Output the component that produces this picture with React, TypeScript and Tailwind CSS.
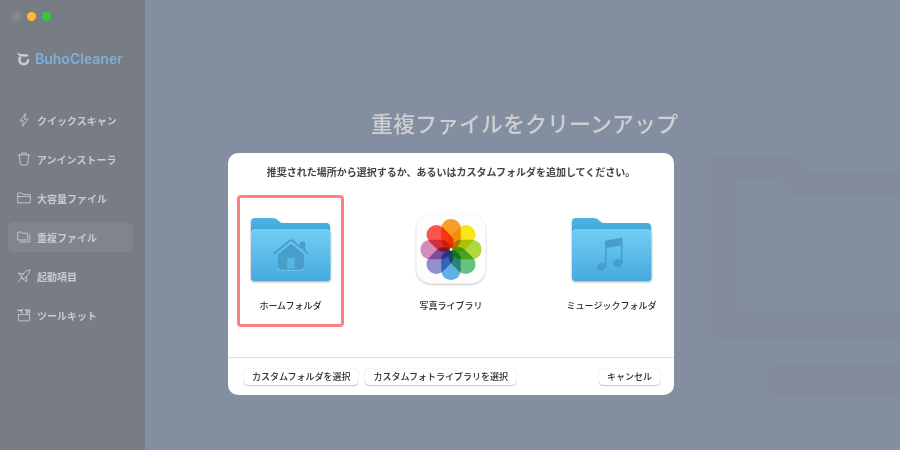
import type { ReactNode } from "react";
import { clsx } from "clsx";

function LineIcon({ children }: { children: ReactNode }) {
  return (
    <svg
      viewBox="0 0 14 14"
      className="size-[14px] shrink-0"
      fill="none"
      stroke="currentColor"
      strokeWidth="0.9"
      strokeLinecap="round"
      strokeLinejoin="round"
      aria-hidden="true"
    >
      {children}
    </svg>
  );
}

const navItems = [
  {
    label: "クイックスキャン",
    icon: <path d="M8.2 1 3 7.800h3.300L5.500 13.300 11 6.200H7.500L8.200 1Z" />,
  },
  {
    label: "アンインストーラ",
    icon: <path d="M1 2.9h12M4.8 2.7V1h4.4v1.7M2.4 3.1l.8 8.9q.1 1 1 1h5.6q.9 0 1-1l.8-8.9" />,
  },
  {
    label: "大容量ファイル",
    icon: <path d="M.7 11.6V2h4.1l1.3 1.5h7.2v8.1q0 .3-.3.3H1q-.3 0-.3-.3ZM.7 5.6h12.6" />,
  },
  {
    label: "重複ファイル",
    active: true,
    icon: <path d="M.7 9.7V2h3.4l1.2 1.3h5.4v6.4q0 .3-.3.3H1q-.3 0-.3-.3ZM3 12h9.3q.5 0 .5-.5V4.8" />,
  },
  {
    label: "起動項目",
    icon: (
      <>
        <path d="M12.700 1.200C9.600 1.200 6.600 3.200 4 8l2 2c4.500-2.500 6.700-5.700 6.700-8.800Z" />
        <path d="M6.300 4.900 1.200 4l3.200 3.500M9.300 8l.600 5-3.600-3M4 9.900l-2.800 2.900M5.200 8.800 3.600 10.400" />
      </>
    ),
  },
  {
    label: "ツールキット",
    icon: (
      <>
        <path d="M1.400 6.600v5.700q0 .6.6.6h10q.6 0 .6-.6V6.600H1.400Z" />
        <path strokeWidth="1.200" d="M1 2.300h3.600l1-1M3.300 2.600l1.900 2.400M8.300 2.200l1.500-.5.900 1.200-1.400 1.300M12.700 1.600l-1 1.100 1.200.8M10.400 4l-1 1M12.500 4.600l-.7.600" />
      </>
    ),
  },
];

function Logo() {
  return (
    <svg viewBox="0 0 14 16" className="h-4 w-[14px] shrink-0" aria-hidden="true">
      <path d="M.3.900C2 2.900 4 3.200 6.500 3.100c2.400-.1 4 .3 5.300 1.600-1.800 1.300-5.300 1.200-8.300.600C1.500 4.500.500 2.900.3.900Z" fill="currentColor" />
      <path
        d="M3.700 5.600C.9 8.900 2.800 13.200 6.800 13.200c2.900 0 4.700-2.200 4.400-5"
        fill="none"
        stroke="currentColor"
        strokeWidth="2.400"
      />
    </svg>
  );
}

function Sidebar() {
  return (
    <aside className="flex w-[145px] shrink-0 flex-col bg-[#787c85] text-[#cbcbcd]">
      <div className="flex gap-[6px] pt-[12px] pl-[12px]">
        <span className="size-[9px] rounded-full bg-[#868891]" />
        <span className="size-[9px] rounded-full bg-[#fdbc2e]" />
        <span className="size-[9px] rounded-full bg-[#36c93f]" />
      </div>
      <div className="mt-[28px] flex h-5 items-center gap-1 pl-[17px]">
        <Logo />
        <span className="font-['Inter',sans-serif] text-[14px] leading-5 font-semibold text-[#7faed8]">BuhoCleaner</span>
      </div>
      <nav className="mt-[36px] flex flex-col gap-[9px] pr-[12px] pl-2">
        {navItems.map((item) => (
          <a
            key={item.label}
            href="#"
            aria-current={item.active ? "page" : undefined}
            className={clsx(
              "flex h-[30px] items-center gap-[6px] rounded-md pl-[9px] text-[10px] font-bold",
              item.active && "bg-[#80848e]",
            )}
          >
            <LineIcon>{item.icon}</LineIcon>
            {item.label}
          </a>
        ))}
      </nav>
    </aside>
  );
}

function Folder({ id, children }: { id: string; children: ReactNode }) {
  return (
    <svg viewBox="0 0 88 76" className="h-[76px] w-[88px]" aria-hidden="true">
      <defs>
        <linearGradient id={`${id}-front`} x1="0" y1="0" x2="0" y2="1">
          <stop offset="0" stopColor="#72cdf5" />
          <stop offset="1" stopColor="#45aadd" />
        </linearGradient>
        <linearGradient id={`${id}-back`} x1="0" y1="0" x2="0" y2="1">
          <stop offset="0" stopColor="#4fb4e4" />
          <stop offset="0.3" stopColor="#36a0d6" />
        </linearGradient>
        <filter id={`${id}-shadow`} x="-10%" y="-10%" width="120%" height="125%">
          <feDropShadow dx="0" dy="1" stdDeviation="1" floodColor="#000" floodOpacity="0.35" />
        </filter>
      </defs>
      <g filter={`url(#${id}-shadow)`}>
        <path
          d="M4 11q0-4 4-4h17c3 0 4.300.7 6 2.400l1.600 1.400c1.200 1 2 1.300 4 1.300H79q4 0 4 4V65q0 4-4 4H8q-4 0-4-4Z"
          fill={`url(#${id}-back)`}
        />
        <rect x="4" y="18.500" width="79.500" height="51.500" rx="3.500" fill={`url(#${id}-front)`} />
        <path d="M4.500 21q.5-2.200 3-2.200H80q2.500 0 3 2.200" fill="none" stroke="#93dcfb" strokeWidth="0.700" />
      </g>
      {children}
    </svg>
  );
}

function HomeFolder() {
  return (
    <Folder id="home">
      <g fill="#469ec9">
        <path
          d="m27.500 42.200 15-12.500q1.500-1.200 3 0L54 36.500v-4.800h3.200v7.700l3.300 2.800"
          fill="none"
          stroke="#469ec9"
          strokeWidth="1.800"
          strokeLinecap="round"
          strokeLinejoin="round"
        />
        <path d="M54 31.700h3.200v8L54 36.500Z" />
        <path
          fillRule="evenodd"
          d="M31 43.500 44 32.800l13 10.700v13q0 2.300-2.300 2.300H33.300q-2.300 0-2.300-2.300ZM40.200 47v9.500h7.600V47Z"
        />
      </g>
      <path d="M31 56.800q.1 2.500 2.400 2.500h21.200q2.300 0 2.400-2.500M40.200 56.800h7.600" fill="none" stroke="#7fcef0" strokeWidth="0.700" />
    </Folder>
  );
}

function MusicFolder() {
  return (
    <Folder id="music">
      <g fill="#469ec9">
        <path d="M37 31q0-1.300 1.300-1.500l15.200-2.700q1-.2 1 .8v24h-1.700V34.500L38.700 37v18.500H37Z" />
        <ellipse cx="33.800" cy="55.500" rx="4.900" ry="4" transform="rotate(-18 33.800 55.500)" />
        <ellipse cx="49.800" cy="52" rx="4.900" ry="4" transform="rotate(-18 49.800 52)" />
      </g>
    </Folder>
  );
}

const petals = ["#f99d2c", "#f9e51a", "#b0d73f", "#66c27e", "#60afe6", "#918fce", "#d48aba", "#fc564c"];

function PhotosIcon() {
  return (
    <svg viewBox="0 0 88 76" className="h-[76px] w-[88px]" aria-hidden="true">
      <defs>
        <filter id="photos-shadow" x="-10%" y="-10%" width="120%" height="125%">
          <feDropShadow dx="0" dy="1" stdDeviation="1" floodColor="#000" floodOpacity="0.3" />
        </filter>
      </defs>
      <rect x="9.500" y="3.500" width="69" height="69" rx="15" fill="#fdfdfd" filter="url(#photos-shadow)" />
      <g className="isolate">
        {petals.map((color, i) => (
          <rect
            key={color}
            x="34.250"
            y="8"
            width="19.500"
            height="30"
            rx="9.500"
            fill={color}
            transform={`rotate(${i * 45} 44 38.500)`}
            className="mix-blend-multiply"
          />
        ))}
      </g>
      <circle cx="44" cy="38.500" r="1.300" fill="#fff" />
    </svg>
  );
}

const locations = [
  { label: "ホームフォルダ", icon: <HomeFolder />, selected: true },
  { label: "写真ライブラリ", icon: <PhotosIcon /> },
  { label: "ミュージックフォルダ", icon: <MusicFolder /> },
];

function DialogButton({ children }: { children: ReactNode }) {
  return (
    <button
      type="button"
      className="h-4 rounded-[4px] bg-white px-2 text-[9px] leading-4 font-medium whitespace-nowrap shadow-[0_0_1px_rgba(0,0,0,0.3),0_1px_1px_rgba(0,0,0,0.2)]"
    >
      {children}
    </button>
  );
}

function LocationDialog() {
  return (
    <div
      role="dialog"
      aria-labelledby="dialog-message"
      className="w-[446px] overflow-hidden rounded-[10px] bg-white text-[#2e2e2e]"
    >
      <p id="dialog-message" className="pt-[11px] text-center text-[10px] leading-4 font-bold text-[#444444]">
        推奨された場所から選択するか、あるいはカスタムフォルダを追加してください。
      </p>
      <div className="mt-[15px] mb-[30px] flex justify-between px-[9px]">
        {locations.map((location) => (
          <button
            key={location.label}
            type="button"
            className={clsx(
              "flex h-[132px] w-[107px] flex-col items-center rounded-[4px] border-[3px] pt-[13px]",
              location.selected ? "border-[#ff8080]" : "border-transparent",
            )}
          >
            {location.icon}
            <span className="mt-[11px] text-[9px] leading-4 font-medium whitespace-nowrap">{location.label}</span>
          </button>
        ))}
      </div>
      <footer className="flex h-[38px] items-center gap-[7px] border-t border-[#dedede] pr-[14px] pl-4">
        <DialogButton>カスタムフォルダを選択</DialogButton>
        <DialogButton>カスタムフォトライブラリを選択</DialogButton>
        <div className="ml-auto flex">
          <DialogButton>キャンセル</DialogButton>
        </div>
      </footer>
    </div>
  );
}

export default function App() {
  return (
    <div className="relative flex min-h-screen overflow-hidden bg-[#838ea0] font-['Noto_Sans_CJK_JP',sans-serif]">
      <Sidebar />
      <main className="relative flex-1 pt-[106px]">
        <svg viewBox="0 0 190 246" className="absolute top-[152px] right-0 h-[246px] w-[190px]" aria-hidden="true">
          <path
            d="M200 33H96c-5 0-8-4-11-7l-5-5c-4-4-6-6-11-6H14v159h186"
            fill="none"
            stroke="#838a9d"
            strokeWidth="26"
            strokeLinejoin="round"
          />
          <rect x="57" y="214" width="160" height="30" rx="13" fill="#838a9d" />
        </svg>
        <h1 className="relative pl-1 text-center text-[22px] leading-8 font-medium text-[#cfcfcf]">
          重複ファイルをクリーンアップ
        </h1>
      </main>
      <div className="absolute inset-0 flex items-start justify-center pt-[153px] pl-[2px]">
        <LocationDialog />
      </div>
    </div>
  );
}
